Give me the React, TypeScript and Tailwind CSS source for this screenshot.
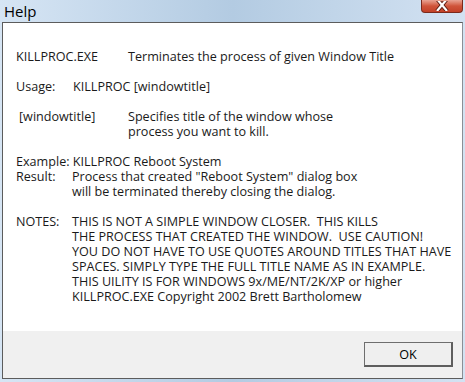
const font = { fontFamily: '"Open Sans", "Liberation Sans", sans-serif' };

const notes = [
  "THIS IS NOT A SIMPLE WINDOW CLOSER.  THIS KILLS",
  "THE PROCESS THAT CREATED THE WINDOW.  USE CAUTION!",
  "YOU DO NOT HAVE TO USE QUOTES AROUND TITLES THAT HAVE",
  "SPACES. SIMPLY TYPE THE FULL TITLE NAME AS IN EXAMPLE.",
  "THIS UILITY IS FOR WINDOWS 9x/ME/NT/2K/XP or higher",
  "KILLPROC.EXE Copyright 2002 Brett Bartholomew",
];

function CloseButton() {
  return (
    <div className="mr-[2px] w-[42px] h-[13px] rounded-b-[4px] border border-t-0 border-[#7a2a1c] bg-gradient-to-b from-[#e8a393] via-[#d0543a] to-[#c24128] flex items-center justify-center">
      <svg width="14" height="10" viewBox="0 0 14 10">
        <path d="M2 -2 L12 10 M12 -2 L2 10" stroke="#5a1a10" strokeWidth="4" />
        <path d="M2 -2 L12 10 M12 -2 L2 10" stroke="#ffffff" strokeWidth="2.2" />
      </svg>
    </div>
  );
}

export default function App() {
  return (
    <div
      className="w-[465px] h-[382px] flex flex-col bg-gradient-to-r from-[#d6e5f4] via-[#b3cbe2] to-[#d3e2f2] text-[12.6px] leading-[15px] text-[#1a1a1a]"
      style={font}
    >
      {/* Title bar */}
      <div className="h-[22px] flex items-start justify-between">
        <span className="pl-[4px] pt-[2px] text-[15px] leading-[18px] text-black">Help</span>
        <CloseButton />
      </div>

      {/* Client area */}
      <div className="mx-[2px] mb-[3px] flex-1 flex flex-col border border-[#5c5c5c] border-r-[#8a8f96] bg-white">
        <div className="flex-1 pl-[13px] pt-[26px]">
          <div className="flex">
            <span className="w-[112px]">KILLPROC.EXE</span>
            <span>Terminates the process of given Window Title</span>
          </div>
          <div className="h-[15px]" />
          <div className="flex">
            <span className="w-[57px]">Usage:</span>
            <span>KILLPROC [windowtitle]</span>
          </div>
          <div className="h-[15px]" />
          <div className="flex">
            <span className="w-[112px] pl-[3px]">[windowtitle]</span>
            <span>
              Specifies title of the window whose
              <br />
              process you want to kill.
            </span>
          </div>
          <div className="h-[15px]" />
          <div>Example: KILLPROC Reboot System</div>
          <div className="flex">
            <span className="w-[56px]">Result:</span>
            <span>
              Process that created "Reboot System" dialog box
              <br />
              will be terminated thereby closing the dialog.
            </span>
          </div>
          <div className="h-[15px]" />
          <div className="flex">
            <span className="w-[56px] shrink-0">NOTES:</span>
            <div className="flex flex-col whitespace-pre">
              {notes.map((line) => (
                <span key={line}>{line}</span>
              ))}
            </div>
          </div>
        </div>
        <div className="h-[47px] bg-[#f0f0f0] flex items-start justify-end pt-[11px] pr-[9px]">
          <button className="w-[89px] h-[25px] border border-[#6e6e6e] border-r-2 border-b-2 border-r-[#5e5e5e] border-b-[#5e5e5e] bg-[#efefef] text-[12.6px] text-black">
            OK
          </button>
        </div>
      </div>
    </div>
  );
}
